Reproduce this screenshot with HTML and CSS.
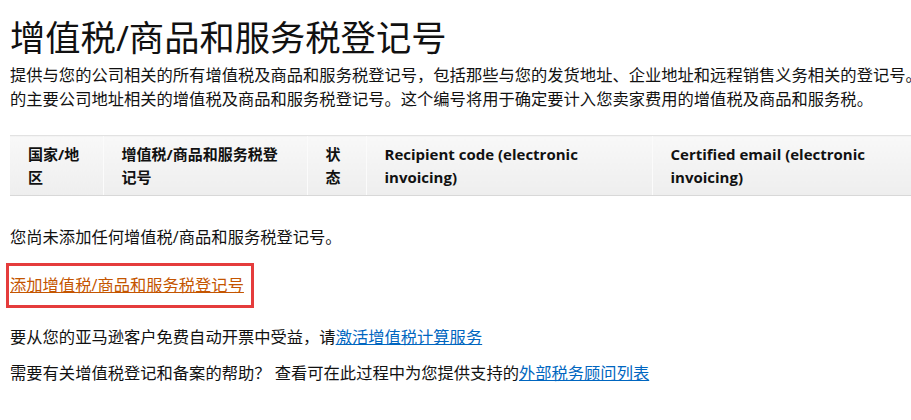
FILE: index.html
```html
<!DOCTYPE html>
<html lang="zh-CN">
<head>
<meta charset="utf-8">
<title>增值税/商品和服务税登记号</title>
<link rel="stylesheet" href="styles.css">
</head>
<body>
<div class="page">
  <h1 class="title">增值税/商品和服务税登记号</h1>
  <p class="intro">提供与您的公司相关的所有增值税及商品和服务税登记号，包括那些与您的发货地址、企业地址和远程销售义务相关的登记号。<br>的主要公司地址相关的增值税及商品和服务税登记号。这个编号将用于确定要计入您卖家费用的增值税及商品和服务税。</p>
  <div class="table-wrap">
    <table class="reg-table">
      <colgroup>
        <col class="c1"><col class="c2"><col class="c3"><col class="c4"><col class="c5">
      </colgroup>
      <thead>
        <tr>
          <th>国家/地区</th>
          <th>增值税/商品和服务税登记号</th>
          <th>状态</th>
          <th>Recipient code (electronic invoicing)</th>
          <th>Certified email (electronic invoicing)</th>
        </tr>
      </thead>
    </table>
  </div>
  <p class="empty">您尚未添加任何增值税/商品和服务税登记号。</p>
  <div class="add-box"><a href="#" class="add-link">添加增值税/商品和服务税登记号</a></div>
  <p class="note first">要从您的亚马逊客户免费自动开票中受益，请<a href="#" class="blue">激活增值税计算服务</a></p>
  <p class="note">需要有关增值税登记和备案的帮助？ 查看可在此过程中为您提供支持的<a href="#" class="blue">外部税务顾问列表</a></p>
</div>
</body>
</html>
```

FILE: styles.css
```css
html, body {
  margin: 0;
  padding: 0;
  background: #fff;
  overflow: hidden;
}
body {
  font-family: "Open Sans", "Noto Sans CJK SC", sans-serif;
  color: #111;
  font-size: 16.3px;
}
.page {
  padding: 16px 0 0 10px;
  overflow: hidden;
}
.title {
  margin: 0;
  font-size: 35.3px;
  line-height: 42px;
  font-weight: 400;
  color: #111;
  white-space: nowrap;
}
.intro {
  margin: 5px 0 0;
  line-height: 24px;
  white-space: nowrap;
}
.table-wrap {
  margin-top: 24px;
  overflow: hidden;
}
.reg-table {
  table-layout: fixed;
  width: 901px;
  border-collapse: collapse;
}
.c1 { width: 93px; }
.c2 { width: 204px; }
.c3 { width: 59px; }
.c4 { width: 286px; }
.c5 { width: 259px; }
.reg-table th {
  text-align: left;
  vertical-align: top;
  font-size: 15px;
  line-height: 23px;
  font-weight: 700;
  color: #111;
  padding: 7px 18px 6px 18px;
  background: linear-gradient(#f8f8f8, #eeeeee);
  border-top: 1px solid #e2e2e2;
  border-bottom: 1px solid #d8d8d8;
  border-left: 1px solid #fbfbfb;
}
.reg-table th:first-child {
  border-left: none;
}
.empty {
  margin: 29px 0 0;
  line-height: 24px;
}
.add-box {
  display: inline-block;
  margin: 14px 0 0 -4px;
  padding: 7px 7px 8px 1px;
  border: 3px solid #e53c3c;
}
.add-link {
  display: block;
  line-height: 24px;
  color: #c45500;
  text-decoration: underline;
}
.note {
  margin: 12px 0 0;
  line-height: 24px;
}
.note.first {
  margin-top: 17px;
}
.blue {
  color: #0066c0;
  text-decoration: underline;
}
```
